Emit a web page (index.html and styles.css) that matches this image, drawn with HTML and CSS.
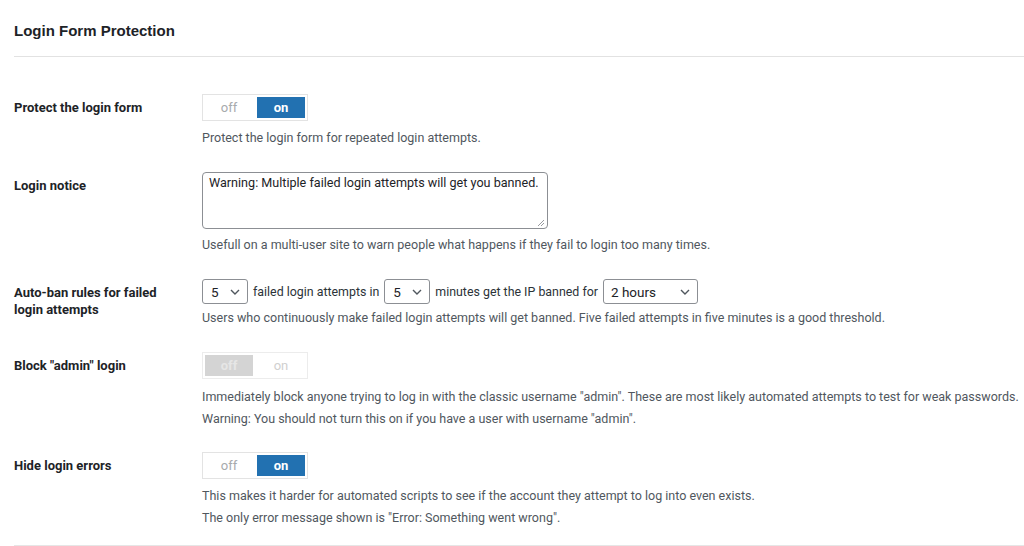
FILE: index.html
```html
<!DOCTYPE html>
<html>
<head>
<meta charset="utf-8">
<link rel="stylesheet" href="styles.css">
</head>
<body>
<div class="panel">
  <div class="panel-head"><h2 class="title">Login Form Protection</h2></div>
  <div class="rows">
    <div class="row first">
      <div class="label">Protect the login form</div>
      <div class="field">
        <div class="toggle"><span class="seg off">off</span><span class="seg on active">on</span></div>
        <p class="desc d1">Protect the login form for repeated login attempts.</p>
      </div>
    </div>
    <div class="row">
      <div class="label">Login notice</div>
      <div class="field">
        <div class="textarea">Warning: Multiple failed login attempts will get you banned.<span class="grip"><svg width="8" height="8" viewBox="0 0 8 8"><path d="M7 1L1 7M7 4L4 7" stroke="#8c8f94" stroke-width="0.9"/></svg></span></div>
        <p class="desc d2">Usefull on a multi-user site to warn people what happens if they fail to login too many times.</p>
      </div>
    </div>
    <div class="row">
      <div class="label">Auto-ban rules for failed login attempts</div>
      <div class="field">
        <div class="inline">
          <div class="select s-small"><span>5</span><svg class="chev" width="10" height="6" viewBox="0 0 10 6"><path d="M1 1l4 4 4-4" fill="none" stroke="#50575e" stroke-width="1.4"/></svg></div>
          <span class="txt">failed login attempts in</span>
          <div class="select s-small"><span>5</span><svg class="chev" width="10" height="6" viewBox="0 0 10 6"><path d="M1 1l4 4 4-4" fill="none" stroke="#50575e" stroke-width="1.4"/></svg></div>
          <span class="txt">minutes get the IP banned for</span>
          <div class="select s-wide"><span>2 hours</span><svg class="chev" width="10" height="6" viewBox="0 0 10 6"><path d="M1 1l4 4 4-4" fill="none" stroke="#50575e" stroke-width="1.4"/></svg></div>
        </div>
        <p class="desc d3">Users who continuously make failed login attempts will get banned. Five failed attempts in five minutes is a good threshold.</p>
      </div>
    </div>
    <div class="row">
      <div class="label">Block "admin" login</div>
      <div class="field">
        <div class="toggle disabled"><span class="seg off active">off</span><span class="seg on">on</span></div>
        <p class="desc d1 d1-plus">Immediately block anyone trying to log in with the classic username "admin". These are most likely automated attempts to test for weak passwords.</p>
        <p class="desc d-next">Warning: You should not turn this on if you have a user with username "admin".</p>
      </div>
    </div>
    <div class="row last">
      <div class="label">Hide login errors</div>
      <div class="field">
        <div class="toggle"><span class="seg off">off</span><span class="seg on active">on</span></div>
        <p class="desc d1">This makes it harder for automated scripts to see if the account they attempt to log into even exists.</p>
        <p class="desc d-next">The only error message shown is "Error: Something went wrong".</p>
      </div>
    </div>
  </div>
</div>
</body>
</html>
```
FILE: styles.css
```css
html, body {
  margin: 0;
  padding: 0;
  background: #fff;
}
body {
  font-family: Roboto, "Liberation Sans", Arial, sans-serif;
  color: #1d2327;
  width: 1024px;
  height: 546px;
  overflow: hidden;
}
.panel {
  padding-left: 14px;
}
.panel-head {
  height: 56px;
  border-bottom: 1px solid #e2e2e2;
  display: flex;
  align-items: center;
}
.title {
  margin: 0;
  font-size: 15px;
  font-weight: 700;
  color: #1d2327;
  padding-top: 4px;
  font-family: "Liberation Sans", Arial, sans-serif;
}
.rows {
  border-bottom: 1px solid #e6e6e6;
}
.row {
  display: grid;
  grid-template-columns: 188px 1fr;
  padding: 12px 0 14px;
}
.row.first {
  padding-top: 37px;
}
.row.last {
  padding-top: 11px;
  padding-bottom: 19px;
}
.label {
  font-size: 13px;
  font-weight: 700;
  line-height: 17px;
  padding-top: 5px;
  padding-right: 20px;
}
.toggle {
  width: 100px;
  height: 21px;
  border: 1px solid #e3e3e3;
  padding: 2px;
  box-sizing: content-box;
  display: flex;
  gap: 4px;
  background: #fff;
}
.toggle .seg {
  flex: 0 0 48px;
  height: 21px;
  display: flex;
  align-items: center;
  justify-content: center;
  font-size: 13px;
  color: #a7aaad;
}
.toggle .seg.on.active {
  background: #2271b1;
  color: #fff;
  font-weight: 700;
}
.toggle.disabled .seg.off.active {
  background: #d4d4d4;
  color: #e6e6e6;
  font-weight: 700;
}
.toggle.disabled .seg.on {
  color: #d0d0d0;
}
.toggle.disabled {
  border-color: #ececec;
}
.desc {
  margin: 0;
  font-size: 12.5px;
  line-height: 16px;
  color: #50575e;
}
.d1 { margin-top: 9px; }
.d1-plus { margin-top: 10px; }
.d2 { margin-top: 8px; }
.d3 { margin-top: 6px; }
.d-next { margin-top: 6px; }
.textarea {
  position: relative;
  width: 346px;
  height: 57px;
  box-sizing: border-box;
  border: 1px solid #8c8f94;
  border-radius: 4px;
  padding: 2px 2px 2px 6px;
  font-size: 12.6px;
  line-height: 16px;
  color: #1d2327;
  white-space: nowrap;
}
.grip {
  position: absolute;
  right: 2px;
  bottom: 1px;
  line-height: 0;
}
.inline {
  display: flex;
  align-items: center;
  gap: 5px;
  height: 25px;
}
.txt {
  font-size: 12.4px;
  color: #2c3338;
}
.select {
  height: 25px;
  box-sizing: border-box;
  border: 1px solid #8c8f94;
  border-radius: 3px;
  display: flex;
  align-items: center;
  justify-content: space-between;
  padding: 0 7px 0 8px;
  font-size: 13.5px;
  color: #1d2327;
}
.s-small { width: 46px; }
.s-wide { width: 95px; padding-left: 7px; }
.chev { display: block; margin-top: 1px; }
```
